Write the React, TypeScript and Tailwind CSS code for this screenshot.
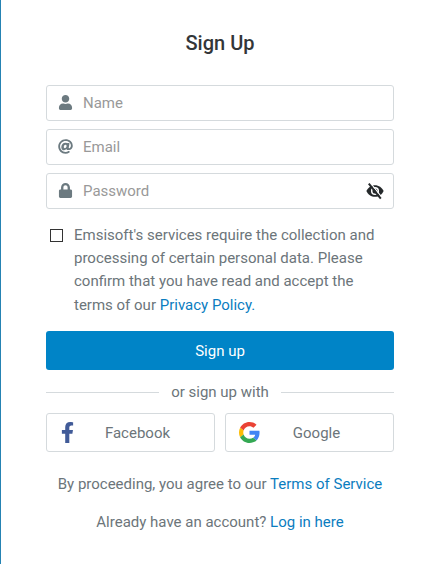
import type { ReactNode } from 'react'
import { FaAt, FaFacebookF, FaLock, FaUser } from 'react-icons/fa'

function GoogleIcon() {
  return (
    <svg viewBox="0 0 48 48" className="h-[21px] w-[21px]">
      <path fill="#EA4335" d="M24 9.5c3.54 0 6.71 1.22 9.21 3.6l6.85-6.85C35.9 2.38 30.47 0 24 0 14.62 0 6.51 5.38 2.56 13.22l7.98 6.19C12.43 13.72 17.74 9.5 24 9.5z" />
      <path fill="#4285F4" d="M46.98 24.55c0-1.57-.15-3.09-.38-4.55H24v9.02h12.94c-.58 2.96-2.26 5.48-4.78 7.18l7.73 6c4.51-4.18 7.09-10.36 7.09-17.65z" />
      <path fill="#FBBC05" d="M10.53 28.59c-.48-1.45-.76-2.99-.76-4.59s.27-3.14.76-4.59l-7.98-6.19C.92 16.46 0 20.12 0 24c0 3.88.92 7.54 2.56 10.78l7.97-6.19z" />
      <path fill="#34A853" d="M24 48c6.48 0 11.93-2.13 15.89-5.81l-7.73-6c-2.15 1.45-4.92 2.3-8.16 2.3-6.26 0-11.57-4.22-13.47-9.91l-7.98 6.19C6.51 42.62 14.62 48 24 48z" />
    </svg>
  )
}

function EyeOffIcon() {
  return (
    <svg viewBox="0 0 18 18" fill="none" className="h-[18px] w-[18px]">
      <path fill="#25292b" d="M.4 9C2 5.400 5.200 3.200 9 3.200S16 5.400 17.600 9C16 12.600 12.800 14.800 9 14.800S2 12.600.4 9z" />
      <circle cx="9" cy="9" r="3.300" stroke="#fff" strokeWidth="1.500" />
      <path stroke="#fff" strokeWidth="1.200" d="M4.300.8l12 15" />
      <path stroke="#25292b" strokeWidth="2" d="M2.800 1.600l12 15" />
    </svg>
  )
}

type FieldProps = {
  icon: ReactNode
  placeholder: string
  type?: string
  action?: ReactNode
}

function Field({ icon, placeholder, type = 'text', action }: FieldProps) {
  return (
    <label className="flex h-9 items-center rounded-[3px] border border-[#d5dadd] pr-[9px] pl-[11px]">
      <span className="mb-px flex w-[15px] shrink-0 justify-center text-[15px] text-[#6c7a80]">{icon}</span>
      <input
        type={type}
        placeholder={placeholder}
        className="ml-[10px] min-w-0 flex-1 bg-transparent pt-px outline-none placeholder:text-[#999999]"
      />
      {action}
    </label>
  )
}

function SocialButton({ icon, label }: { icon: ReactNode; label: string }) {
  return (
    <button className="flex h-[39px] flex-1 items-center rounded-[3px] border border-[#d5dadd]">
      <span className="ml-[13px] flex w-[21px]">{icon}</span>
      <span className="flex-1 pt-0.5 pr-5 text-center">{label}</span>
    </button>
  )
}

export default function App() {
  return (
    <main className="h-[564px] w-[437px] border-l border-[#2583b3] bg-white pr-[43px] pl-[45px] font-['Roboto',sans-serif] text-[15px] leading-[23.25px] text-[#6c757a]">
      <h1 className="pt-[29px] text-center text-[20px] leading-7 font-medium text-[#333638]">Sign Up</h1>

      <form className="mt-7">
        <div className="flex flex-col gap-2">
          <Field icon={<FaUser />} placeholder="Name" />
          <Field icon={<FaAt />} placeholder="Email" type="email" />
          <Field
            icon={<FaLock />}
            placeholder="Password"
            type="password"
            action={
              <button type="button" aria-label="Show password" className="mb-px">
                <EyeOffIcon />
              </button>
            }
          />
        </div>

        <div className="mt-[14px] flex pl-1">
          <input
            type="checkbox"
            id="privacy"
            className="mt-[6px] h-[13px] w-[13px] shrink-0 appearance-none border border-[#333333]"
          />
          <label htmlFor="privacy" className="ml-[11px] w-[310px] pt-[0.75px]">
            Emsisoft's services require the collection and processing of certain personal data. Please
            confirm that you have read and accept the terms of our{' '}
            <a className="text-[#0b7dbf]">Privacy Policy.</a>
          </label>
        </div>

        <button type="button" className="mt-[14.25px] h-[39px] w-full rounded-[3px] bg-[#0084c7] pt-0.5 text-white">
          Sign up
        </button>
      </form>

      <div className="mt-[11px] flex items-center gap-3">
        <span className="h-px flex-1 bg-[#d5dadd]" />
        <span>or sign up with</span>
        <span className="h-px flex-1 bg-[#d5dadd]" />
      </div>

      <div className="mt-[8.75px] flex gap-[10px]">
        <SocialButton icon={<FaFacebookF className="-ml-[3px] text-[#415b98]" size={21} />} label="Facebook" />
        <SocialButton icon={<GoogleIcon />} label="Google" />
      </div>

      <p className="mt-[21px] text-center">
        By proceeding, you agree to our <a className="text-[#0b7dbf]">Terms of Service</a>
      </p>
      <p className="mt-[14.75px] text-center">
        Already have an account? <a className="text-[#0b7dbf]">Log in here</a>
      </p>
    </main>
  )
}
